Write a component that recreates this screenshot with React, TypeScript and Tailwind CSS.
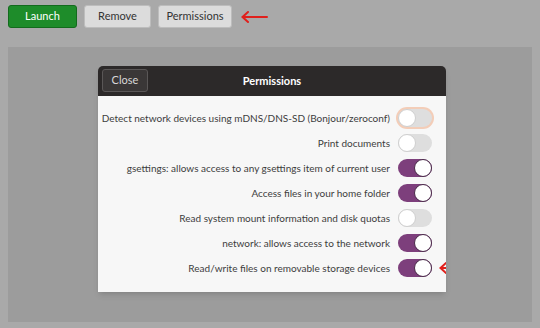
const permissions = [
  {label: "Detect network devices using mDNS/DNS-SD (Bonjour/zeroconf)", on: false, focus: true},
  {label: "Print documents", on: false},
  {label: "gsettings: allows access to any gsettings item of current user", on: true},
  {label: "Access files in your home folder", on: true},
  {label: "Read system mount information and disk quotas", on: false},
  {label: "network: allows access to the network", on: true},
  {label: "Read/write files on removable storage devices", on: true, arrow: true},
];

function RedArrow({className}: {className?: string}) {
  return (
    <svg width="28" height="14" viewBox="0 0 28 14" className={className}>
      <path d="M27 7H3M8 2L2.5 7L8 12" fill="none" stroke="#e0201c" strokeWidth="2" strokeLinecap="round"/>
    </svg>
  );
}

function Toggle({on, focus}: {on: boolean; focus?: boolean}) {
  return (
    <div className={`relative h-[18px] w-[34px] shrink-0 rounded-full ${on ? "bg-[#7d3f7c]" : "bg-[#dedede]"} ${focus ? "ring-2 ring-[#f3cdb8]" : ""}`}>
      <div className={`absolute top-0 h-[18px] w-[18px] rounded-full bg-white border ${on ? "right-0 border-[#4a2a49]" : "left-0 border-[#cfcfcf]"}`}/>
    </div>
  );
}

export default function App() {
  return (
    <div className="flex h-[328px] w-[540px] flex-col bg-[#a9a9a9] font-['Lato',sans-serif] text-[11px]">
      <div className="flex h-[32px] items-center gap-[7px] px-[8px] pt-[1px]">
        <button className="h-[23px] w-[69px] rounded-[3px] border border-[#136b1d] bg-[#1e8c2a] text-white">Launch</button>
        <button className="h-[23px] w-[67px] rounded-[3px] border border-[#bdbdbd] bg-[#dcdcdc] text-[#333]">Remove</button>
        <button className="h-[23px] w-[74px] rounded-[3px] border border-[#bdbdbd] bg-[#dcdcdc] text-[#333]">Permissions</button>
        <RedArrow className="ml-[1px]"/>
      </div>
      <div className="mx-[8px] mb-[6px] mt-[15px] flex flex-1 flex-col bg-[#9c9c9c] pl-[90px] pt-[19px]">
        <div className="w-[348px] overflow-hidden rounded-t-[5px] shadow-md">
          <div className="relative flex h-[30px] items-center justify-center bg-[#2c2929]">
            <button className="absolute left-[4px] top-[3px] h-[23px] w-[46px] rounded-[3px] border border-[#5a5757] bg-[#3a3737] text-[#d8d8d8]">Close</button>
            <span className="font-bold text-white">Permissions</span>
          </div>
          <div className="flex flex-col gap-[7px] bg-[#f7f7f7] px-[14px] pb-[15px] pt-[13px] text-[10px]">
            {permissions.map((p) => (
              <div key={p.label} className="relative flex h-[18px] items-center justify-end gap-[8px]">
                <span className="whitespace-nowrap text-[#3d3d3d]">{p.label}</span>
                <Toggle on={p.on} focus={p.focus}/>
                {p.arrow && <RedArrow className="absolute right-[-34px] top-[2px]"/>}
              </div>
            ))}
          </div>
        </div>
      </div>
    </div>
  );
}
